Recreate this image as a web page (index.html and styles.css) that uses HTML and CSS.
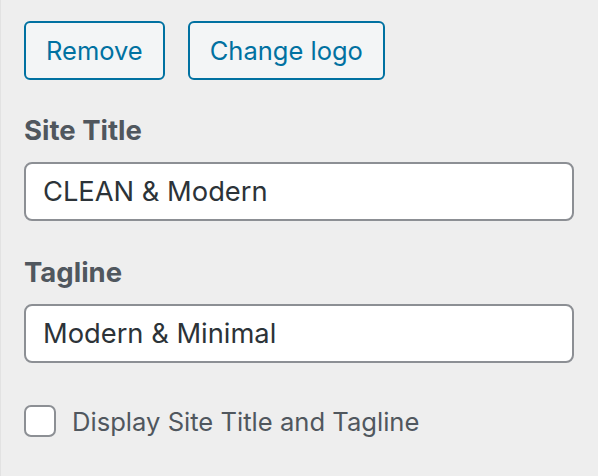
FILE: index.html
```html
<!DOCTYPE html>
<html lang="en">
<head>
<meta charset="UTF-8" />
<meta name="viewport" content="width=device-width, initial-scale=1" />
<title>Site Identity</title>
<link rel="stylesheet" href="styles.css">
</head>
<body>

<div class="identity-panel">
  <div class="logo-actions">
    <button type="button" class="btn">Remove</button>
    <button type="button" class="btn">Change logo</button>
  </div>

  <div class="field">
    <label for="blogname">Site Title</label>
    <input type="text" id="blogname" value="CLEAN &amp; Modern" />
  </div>

  <div class="field">
    <label for="blogdescription">Tagline</label>
    <input type="text" id="blogdescription" value="Modern &amp; Minimal" />
  </div>

  <div class="check-row">
    <input type="checkbox" id="displayHeader" />
    <label for="displayHeader">Display Site Title and Tagline</label>
  </div>
</div>

</body>
</html>
```

FILE: styles.css
```css
body {
  margin: 0;
  background: #eeeeee;
  font-family: Inter, Roboto, 'Noto Sans', sans-serif;
  color: #50575e;
}
.identity-panel {
  box-sizing: border-box;
  min-height: 100vh;
  padding: 21px 24px 0 23px;
  border-left: 1px solid #e2e2e2;
}
.logo-actions {
  display: flex;
  gap: 23px;
  margin-bottom: 33px;
}
.btn {
  height: 59px;
  padding: 0 20px;
  background: #f3f5f6;
  border: 2px solid #0071a1;
  border-radius: 6px;
  color: #0071a1;
  font-family: inherit;
  font-size: 25.5px;
  cursor: pointer;
}
.field {
  display: flex;
  flex-direction: column;
  margin-bottom: 34px;
}
.field label {
  font-size: 27.5px;
  line-height: 34px;
  font-weight: 700;
  margin-bottom: 15px;
}
.field input {
  height: 59px;
  box-sizing: border-box;
  padding: 0 17px;
  border: 2px solid #8c8f94;
  border-radius: 8px;
  background: #fff;
  color: #2c3338;
  font-family: inherit;
  font-size: 27.3px;
}
.check-row {
  display: flex;
  align-items: center;
  gap: 16px;
  margin-top: 42px;
}
.check-row input {
  appearance: none;
  margin: 0;
  width: 32px;
  height: 32px;
  box-sizing: border-box;
  border: 2px solid #8c8f94;
  border-radius: 7px;
  background: #fff;
}
.check-row label {
  font-size: 25.6px;
}
```
